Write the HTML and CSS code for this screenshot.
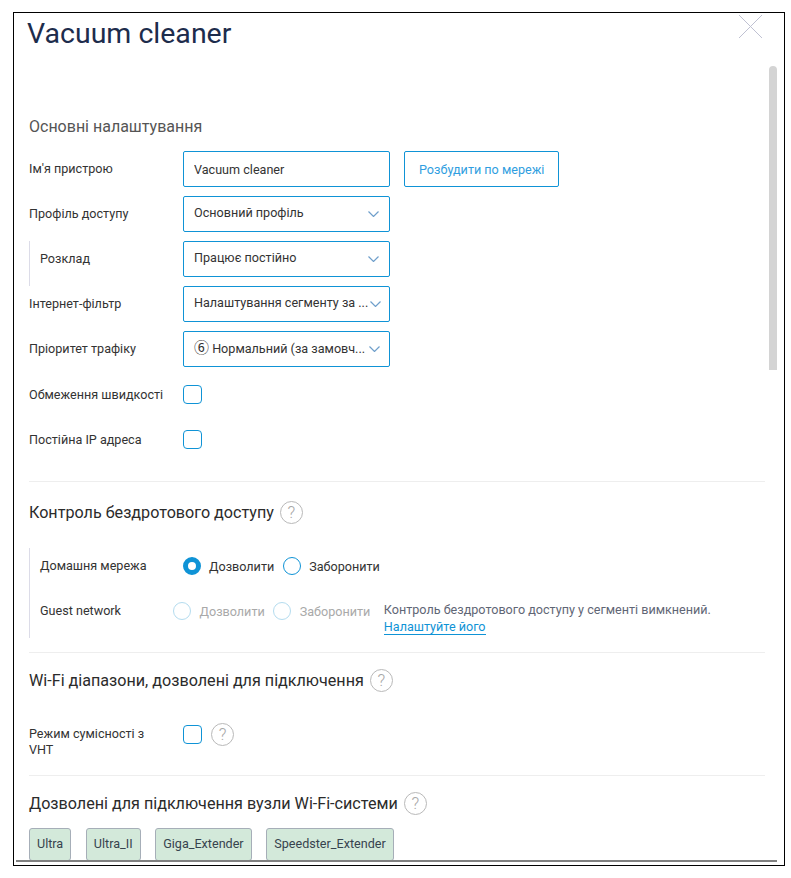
FILE: index.html
```html
<!DOCTYPE html>
<html lang="uk">
<head>
  <meta charset="UTF-8">
  <title>Vacuum cleaner</title>
  <link rel="stylesheet" href="styles.css">
</head>
<body>
  <div class="modal">
    <button class="btn-close" aria-label="close">
      <svg width="25" height="25" viewBox="0 0 25 25"><path d="M1 1L24 24M24 1L1 24" stroke="#bfc1d2" stroke-width="1" fill="none"/></svg>
    </button>
    <div class="scroll-thumb"></div>

    <div class="modal-body">
      <h1 class="modal-title">Vacuum cleaner</h1>

      <!-- main settings -->
      <div class="section section-main">
        <h3 class="section-title section-title-muted">Основні налаштування</h3>
        <div class="row">
          <label class="row-label">Ім'я пристрою</label>
          <input class="field" type="text" value="Vacuum cleaner">
          <button class="btn-wake">Розбудити по мережі</button>
        </div>
        <div class="row">
          <label class="row-label">Профіль доступу</label>
          <div class="field select"><span class="select-text">Основний профіль</span><svg class="chevron" viewBox="0 0 11 6"><path d="M0.5 0.5L5.5 5.5L10.5 0.5"/></svg></div>
        </div>
        <div class="nested">
          <div class="row">
            <label class="row-label">Розклад</label>
            <div class="field select"><span class="select-text">Працює постійно</span><svg class="chevron" viewBox="0 0 11 6"><path d="M0.5 0.5L5.5 5.5L10.5 0.5"/></svg></div>
          </div>
        </div>
        <div class="row">
          <label class="row-label">Інтернет-фільтр</label>
          <div class="field select select-long"><span class="select-text">Налаштування сегменту за ...</span><svg class="chevron" viewBox="0 0 11 6"><path d="M0.5 0.5L5.5 5.5L10.5 0.5"/></svg></div>
        </div>
        <div class="row">
          <label class="row-label">Пріоритет трафіку</label>
          <div class="field select select-prio"><span class="select-text"><span class="prio">⑥</span> Нормальний (за замовч...</span><svg class="chevron" viewBox="0 0 11 6"><path d="M0.5 0.5L5.5 5.5L10.5 0.5"/></svg></div>
        </div>
        <div class="row">
          <label class="row-label row-label-check">Обмеження швидкості</label>
          <span class="checkbox"></span>
        </div>
        <div class="row">
          <label class="row-label row-label-check">Постійна IP адреса</label>
          <span class="checkbox"></span>
        </div>
      </div>

      <!-- wireless access -->
      <div class="section section-wireless">
        <h3 class="section-title">Контроль бездротового доступу <span class="help">?</span></h3>
        <div class="nested">
          <div class="row">
            <label class="row-label">Домашня мережа</label>
            <span class="radio radio-on"></span><span class="radio-label">Дозволити</span>
            <span class="radio"></span><span class="radio-label">Заборонити</span>
          </div>
          <div class="row row-guest">
            <label class="row-label">Guest network</label>
            <span class="radio radio-off"></span><span class="radio-label radio-label-off">Дозволити</span>
            <span class="radio radio-off"></span><span class="radio-label radio-label-off">Заборонити</span>
            <div class="guest-note">Контроль бездротового доступу у сегменті вимкнений.<br><a class="link" href="#">Налаштуйте його</a></div>
          </div>
        </div>
      </div>

      <!-- wifi bands -->
      <div class="section">
        <h3 class="section-title">Wi-Fi діапазони, дозволені для підключення <span class="help">?</span></h3>
        <div class="row">
          <label class="row-label row-label-wrap">Режим сумісності з VHT</label>
          <span class="checkbox"></span>
          <span class="help help-row">?</span>
        </div>
      </div>

      <!-- mesh nodes -->
      <div class="section">
        <h3 class="section-title section-title-tags">Дозволені для підключення вузли Wi-Fi-системи <span class="help">?</span></h3>
        <div class="tags">
          <span class="tag">Ultra</span>
          <span class="tag">Ultra_II</span>
          <span class="tag">Giga_Extender</span>
          <span class="tag">Speedster_Extender</span>
        </div>
      </div>
    </div>
    <div class="modal-bottom"></div>
  </div>
</body>
</html>
```

FILE: styles.css
```css
html, body {
  height: 100%;
}
body {
  margin: 0;
  padding: 12px 0 0 13px;
  box-sizing: border-box;
  background: #fff;
  font-family: Roboto, "Liberation Sans", sans-serif;
  font-size: 12.6px;
  color: #2f3640;
  overflow: hidden;
}

.modal {
  position: relative;
  width: 772px;
  height: 854px;
  border: 1px solid #000;
  box-sizing: border-box;
  background: #fff;
  display: flex;
  flex-direction: column;
}
.btn-close {
  position: absolute;
  top: 1px;
  right: 21px;
  width: 25px;
  height: 25px;
  padding: 0;
  background: none;
  border: none;
  cursor: pointer;
}
.btn-close svg {
  display: block;
}
.scroll-thumb {
  position: absolute;
  top: 53px;
  left: 755px;
  width: 8px;
  height: 304px;
  background: #d4d4d4;
  border-radius: 4px 4px 0 0;
}

.modal-body {
  flex: 1;
  min-height: 0;
  overflow: hidden;
  padding: 0 19px 0 15px;
}
.modal-bottom {
  flex: none;
  height: 2px;
  margin: 0 7px 3px 2px;
  background: #808080;
}
.modal-title {
  margin: 0 0 0 -2px;
  height: 42px;
  line-height: 42px;
  font-size: 28.5px;
  font-weight: 400;
  color: #1d2c4c;
}

/* sections */
.section {
  border-top: 1px solid #eee;
  padding-top: 9px;
  margin-top: 14px;
}
.section-main {
  border-top: none;
  padding-top: 0;
  margin-top: 53px;
}
.section-wireless {
  margin-top: 15px;
  padding-top: 12px;
}
.section-title {
  display: flex;
  align-items: center;
  gap: 6px;
  height: 36px;
  margin: 0 0 18px;
  font-size: 16.15px;
  font-weight: 400;
  color: #2b2b2b;
}
.section-title-muted {
  margin-bottom: 7px;
  font-size: 16px;
  color: #555;
}
.section-title-tags {
  margin-bottom: 7px;
}

.row {
  display: flex;
  align-items: center;
  height: 45px;
  box-sizing: border-box;
  padding-bottom: 9px;
}
.row-label {
  flex: none;
  width: 154px;
  line-height: 16px;
  color: #333;
}
.row-label-check {
  padding-top: 2px;
}
.row-label-wrap {
  padding-right: 20px;
  box-sizing: border-box;
  margin-top: 16px;
}
.nested {
  border-left: 1px solid #dcdce8;
}
.nested .row-label {
  width: 143px;
  padding-left: 10px;
}

/* controls */
.field {
  width: 207px;
  height: 36px;
  box-sizing: border-box;
  border: 1px solid #0f93d6;
  border-radius: 2px;
  padding: 0 10px;
  background: #fff;
  font: 12.6px Roboto, "Liberation Sans", sans-serif;
  color: #333;
  outline: none;
}
.select {
  display: flex;
  align-items: center;
  justify-content: space-between;
}
.select-long {
  padding-right: 8px;
}
.select-prio {
  padding-right: 9px;
}
.select-text {
  min-width: 0;
  flex: 1;
  line-height: 18px;
  margin-bottom: 2px;
  white-space: nowrap;
}
.prio {
  font-family: "Noto Sans CJK SC", sans-serif;
  font-size: 15px;
  line-height: 18px;
}
.chevron {
  flex: none;
  width: 11px;
  height: 6px;
  margin-left: 4px;
  fill: none;
  stroke: #6f9fcb;
  stroke-width: 1.2;
}
.btn-wake {
  height: 36px;
  margin-left: 14px;
  padding: 0 14px;
  background: #fff;
  border: 1px solid #0f93d6;
  border-radius: 2px;
  font: 12.6px Roboto, "Liberation Sans", sans-serif;
  color: #2f9ee0;
  cursor: pointer;
}
.checkbox {
  flex: none;
  width: 19px;
  height: 19px;
  box-sizing: border-box;
  border: 1px solid #0f93d6;
  border-radius: 4px;
}
.help {
  display: inline-flex;
  flex: none;
  align-items: center;
  justify-content: center;
  width: 23px;
  height: 23px;
  box-sizing: border-box;
  border: 1px solid #b9b9b9;
  border-radius: 50%;
  font-size: 17px;
  font-weight: 300;
  color: #a8a8a8;
}
.help-row {
  margin-left: 9px;
}

.radio {
  flex: none;
  width: 18px;
  height: 18px;
  box-sizing: border-box;
  border: 1px solid #0f93d6;
  border-radius: 50%;
}
.radio-on {
  border: 5px solid #0f93d6;
}
.radio-off {
  border-color: #b4dcef;
}
.radio-label {
  margin: 0 9px 0 8px;
  color: #333;
}
.radio-label-off {
  margin: 0 8.5px;
  color: #a9a9a9;
}
.row-guest .radio:first-of-type {
  margin-left: -10px;
}
.guest-note {
  margin-left: 5px;
  line-height: 16.5px;
  color: #5f6675;
  padding-top: 15px;
}
.link {
  color: #0f93d6;
  text-decoration: none;
  border-bottom: 1px solid #0f93d6;
}

/* mesh node tags */
.tags {
  display: flex;
  gap: 14.6px;
}
.tag {
  flex: none;
  height: 33px;
  line-height: 30px;
  box-sizing: border-box;
  padding: 0 7px;
  background: #d3e9da;
  border: 1px solid #a6aeb8;
  border-radius: 3px;
  color: #37434e;
}
```
